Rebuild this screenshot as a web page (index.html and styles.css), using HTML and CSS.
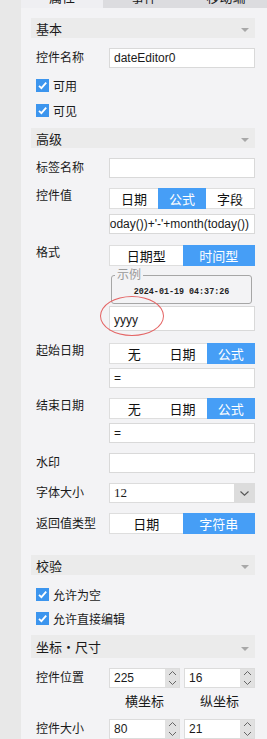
FILE: index.html
```html
<!DOCTYPE html>
<html lang="zh">
<head>
<meta charset="utf-8">
<link rel="stylesheet" href="styles.css">
</head>
<body>
<div class="app">
  <div class="rail"></div>
  <div class="panel">
    <div class="tabs">
      <div class="tab active">属性</div>
      <div class="tab">事件</div>
      <div class="tab">移动端</div>
    </div>
    <div class="content">
      <div class="sec"><span>基本</span><i class="tri"></i></div>
      <div class="row">
        <div class="lbl">控件名称</div>
        <div class="ctl"><div class="input">dateEditor0</div></div>
      </div>
      <div class="checks first">
        <div class="chk"><span class="box"><svg width="13" height="13" viewBox="0 0 13 13"><path d="M3 6.8 L5.4 9.2 L10.2 3.6" fill="none" stroke="#fff" stroke-width="1.8"/></svg></span>可用</div>
        <div class="chk"><span class="box"><svg width="13" height="13" viewBox="0 0 13 13"><path d="M3 6.8 L5.4 9.2 L10.2 3.6" fill="none" stroke="#fff" stroke-width="1.8"/></svg></span>可见</div>
      </div>

      <div class="sec"><span>高级</span><i class="tri"></i></div>
      <div class="row">
        <div class="lbl">标签名称</div>
        <div class="ctl"><div class="input"></div></div>
      </div>
      <div class="row top">
        <div class="lbl">控件值</div>
        <div class="ctl">
          <div class="seg"><span>日期</span><span class="on">公式</span><span>字段</span></div>
          <div class="input formula"><span>year(today())+'-'+month(today())</span></div>
        </div>
      </div>
      <div class="row top fmt">
        <div class="lbl">格式</div>
        <div class="ctl">
          <div class="seg"><span>日期型</span><span class="on">时间型</span></div>
          <fieldset class="sample"><legend>示例</legend><div class="dt">2024-01-19 04:37:26</div></fieldset>
          <div class="input tall">yyyy<span class="ring"></span></div>
        </div>
      </div>
      <div class="row top start">
        <div class="lbl">起始日期</div>
        <div class="ctl">
          <div class="seg"><span>无</span><span>日期</span><span class="on">公式</span></div>
          <div class="input sub">=</div>
        </div>
      </div>
      <div class="row top">
        <div class="lbl">结束日期</div>
        <div class="ctl">
          <div class="seg"><span>无</span><span>日期</span><span class="on">公式</span></div>
          <div class="input sub">=</div>
        </div>
      </div>
      <div class="row">
        <div class="lbl">水印</div>
        <div class="ctl"><div class="input"></div></div>
      </div>
      <div class="row">
        <div class="lbl">字体大小</div>
        <div class="ctl">
          <div class="select"><span class="v">12</span><span class="btn"><svg width="9" height="5" viewBox="0 0 9 5"><path d="M0.5 0.5 L4.5 4.2 L8.5 0.5" fill="none" stroke="#555" stroke-width="1.1"/></svg></span></div>
        </div>
      </div>
      <div class="row">
        <div class="lbl">返回值类型</div>
        <div class="ctl"><div class="seg"><span>日期</span><span class="on">字符串</span></div></div>
      </div>

      <div class="sec check-sec"><span>校验</span><i class="tri"></i></div>
      <div class="checks second">
        <div class="chk"><span class="box"><svg width="13" height="13" viewBox="0 0 13 13"><path d="M3 6.8 L5.4 9.2 L10.2 3.6" fill="none" stroke="#fff" stroke-width="1.8"/></svg></span>允许为空</div>
        <div class="chk"><span class="box"><svg width="13" height="13" viewBox="0 0 13 13"><path d="M3 6.8 L5.4 9.2 L10.2 3.6" fill="none" stroke="#fff" stroke-width="1.8"/></svg></span>允许直接编辑</div>
      </div>

      <div class="sec geo"><span>坐标・尺寸</span><i class="tri"></i></div>
      <div class="row">
        <div class="lbl">控件位置</div>
        <div class="ctl spins">
          <div class="spin"><span class="v">225</span><span class="arrows"><svg width="9" height="16" viewBox="0 0 9 16"><path d="M1 5 L4.5 1.5 L8 5 M1 11 L4.5 14.5 L8 11" fill="none" stroke="#666" stroke-width="1"/></svg></span></div>
          <div class="spin"><span class="v">16</span><span class="arrows"><svg width="9" height="16" viewBox="0 0 9 16"><path d="M1 5 L4.5 1.5 L8 5 M1 11 L4.5 14.5 L8 11" fill="none" stroke="#666" stroke-width="1"/></svg></span></div>
        </div>
      </div>
      <div class="axis"><span>横坐标</span><span>纵坐标</span></div>
      <div class="row size">
        <div class="lbl">控件大小</div>
        <div class="ctl spins">
          <div class="spin"><span class="v">80</span><span class="arrows"><svg width="9" height="16" viewBox="0 0 9 16"><path d="M1 5 L4.5 1.5 L8 5 M1 11 L4.5 14.5 L8 11" fill="none" stroke="#666" stroke-width="1"/></svg></span></div>
          <div class="spin"><span class="v">21</span><span class="arrows"><svg width="9" height="16" viewBox="0 0 9 16"><path d="M1 5 L4.5 1.5 L8 5 M1 11 L4.5 14.5 L8 11" fill="none" stroke="#666" stroke-width="1"/></svg></span></div>
        </div>
      </div>
    </div>
  </div>
</div>
</body>
</html>
```

FILE: styles.css
```css
* { box-sizing: border-box; margin: 0; padding: 0; }
html, body { width: 267px; height: 739px; overflow: hidden; }
body {
  background: #e8e8e8;
  font-family: "Liberation Sans", "Noto Sans CJK SC", sans-serif;
  font-size: 12px;
  color: #1a1a1a;
}
.app { display: flex; height: 739px; }
.rail { width: 21px; flex: none; background: #e8e8e8; }
.panel { flex: 1; background: #f3f3f5; display: flex; flex-direction: column; }

.tabs { display: flex; height: 10px; overflow: hidden; }
.tab {
  flex: 1; display: flex; align-items: flex-end; justify-content: center;
  background: #dcdcdf; padding-bottom: 4px; line-height: 13px; font-size: 13px;
}
.tab.active { background: #efeff2; }

.content { padding: 10px 12px 0 10px; }

.sec {
  height: 20px; background: #ebebeb;
  display: flex; align-items: center; justify-content: space-between;
  padding: 0 6px 0 5px; font-size: 13px;
}
.sec .tri {
  width: 0; height: 0; margin-top: 4px;
  border-left: 4px solid transparent; border-right: 4px solid transparent;
  border-top: 4px solid #a8a8a8;
}
.check-sec { margin-top: 21px; }
.geo { height: 23px; margin-top: 5px; }

.row { display: flex; align-items: center; margin-top: 10px; }
.row.top { align-items: flex-start; }
.row.fmt { margin-top: 11px; }
.row.start { margin-top: 12px; }
.row.size { margin-top: 9px; }
.lbl { width: 78px; flex: none; padding-left: 5px; line-height: 16px; font-size: 12px; }
.ctl { width: 146px; flex: none; position: relative; }

.input {
  height: 20px; background: #fff; border: 1px solid #d9d9d9;
  padding-left: 4px; display: flex; align-items: center; white-space: nowrap;
}
.input.formula { margin-top: 5px; overflow: hidden; justify-content: flex-end; padding-right: 5px; }
.input.formula span { flex: none; }
.input.sub { margin-top: 4px; }
.input.tall { height: 25px; margin-top: 2px; position: relative; padding-top: 3px; }
.ring {
  position: absolute; left: -10px; top: -11px; width: 64px; height: 40px;
  border: 1px solid #e46464; border-radius: 50%;
}

.seg { display: flex; height: 21px; background: #fff; border: 1px solid #dedede; }
.seg span {
  flex: 1; display: flex; align-items: center; justify-content: center;
  font-size: 13px; color: #111;
}
.seg .on { background: #469ef6; color: #fff; margin: -1px 0; }
.seg .on:last-child { margin-right: -1px; }

.sample {
  margin: 3px 3px 0 2px; border: 1px solid #a6a6a6; border-radius: 3px;
  padding: 5px 0 5px; text-align: left;
}
.sample legend {
  margin-left: 3px; padding: 0 2px; color: #9a9a9a;
  font-size: 12px; line-height: 12px;
}
.sample .dt {
  text-align: center;
  font-family: "Liberation Mono", monospace; font-size: 8.4px; font-weight: bold;
  line-height: 12px; color: #222;
}

.checks.first { margin-top: 5px; margin-bottom: 5px; }
.checks.second { margin-top: 7px; }
.chk { display: flex; align-items: center; height: 25px; padding-left: 5px; font-size: 12px; }
.checks.second .chk { height: 24px; }
.box {
  width: 13px; height: 13px; background: #3c95ee; margin-right: 4px;
  display: flex; flex: none;
}

.select { height: 20px; display: flex; background: #fff; border: 1px solid #dcdcdc; }
.select .v {
  flex: 1; padding-left: 4px; display: flex; align-items: center;
  font-family: "Liberation Serif", serif; font-size: 13px;
}
.select .btn {
  width: 20px; background: #dcdcdc; display: flex; align-items: center; justify-content: center;
}

.spins { display: flex; gap: 4px; }
.spin { flex: 1; height: 20px; display: flex; background: #fff; border: 1px solid #dcdcdc; }
.spin .v { flex: 1; padding-left: 4px; display: flex; align-items: center; }
.spin .arrows {
  width: 14px; background: #e1e1e1; display: flex; align-items: center; justify-content: center;
}

.axis { display: flex; gap: 4px; margin-left: 78px; width: 146px; margin-top: 6px; }
.axis span { flex: 1; text-align: center; line-height: 16px; font-size: 13px; }
```
